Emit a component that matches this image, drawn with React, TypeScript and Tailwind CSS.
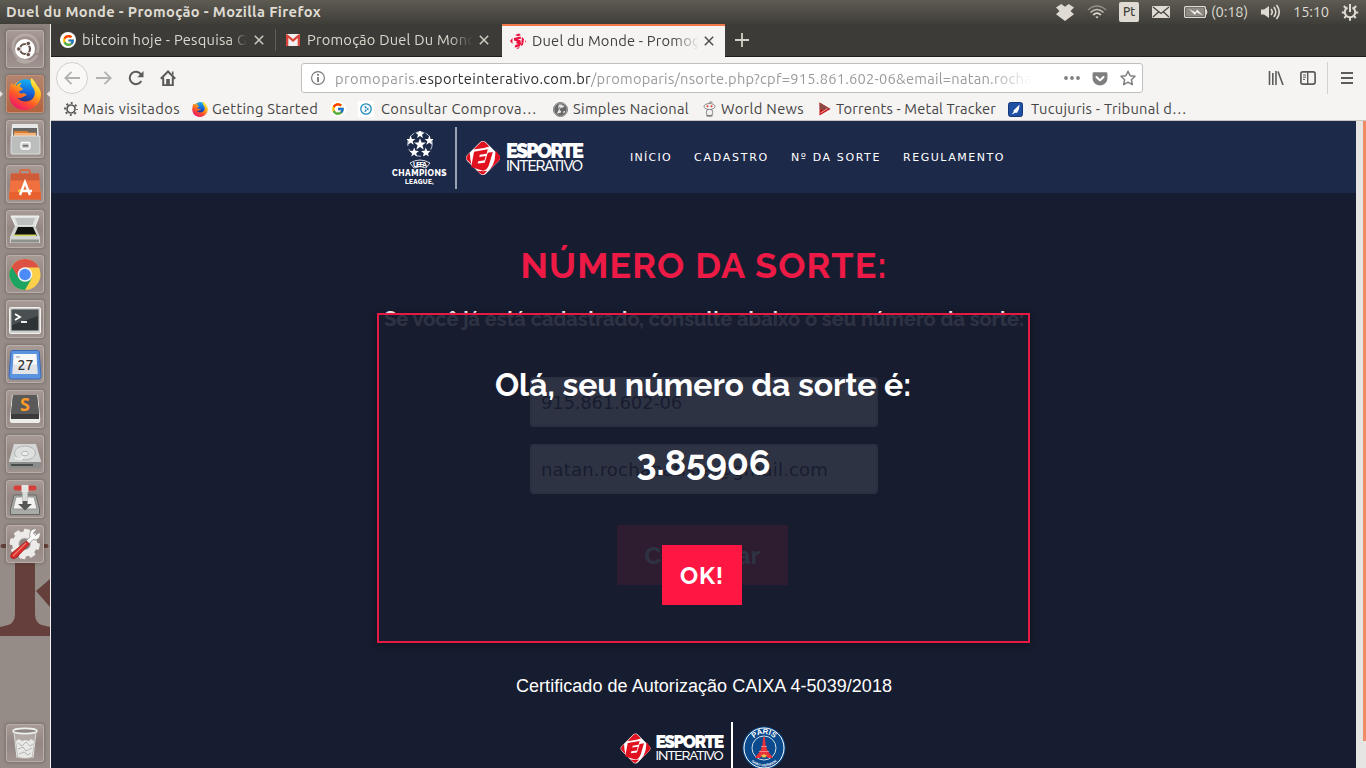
import { useLayoutEffect, useRef, useState, type ReactNode } from "react";
import { FcGoogle } from "react-icons/fc";
import { FaGetPocket, FaGlobeAmericas } from "react-icons/fa";

/* Single line label whose tracking is adjusted to fill a given width. */
function Fit({ w, className = "", children }: { w: number; className?: string; children: string }) {
  const ref = useRef<HTMLSpanElement>(null);
  const [ls, setLs] = useState(0);
  useLayoutEffect(() => {
    const el = ref.current;
    if (el) setLs((w - el.getBoundingClientRect().width) / children.length);
  }, [w, children]);
  return (
    <span className={`block shrink-0 whitespace-nowrap ${className}`} style={{ width: w }}>
      <span ref={ref} className="inline-block whitespace-pre" style={{ letterSpacing: ls }}>
        {children}
      </span>
    </span>
  );
}

function FirefoxIcon({ className }: { className: string }) {
  return (
    <svg viewBox="0 0 32 32" className={className}>
      <defs>
        <linearGradient id="fxBody" x1="0.8" y1="0.05" x2="0.25" y2="0.95">
          <stop offset="0" stopColor="#fff14a" />
          <stop offset="0.35" stopColor="#ffb01c" />
          <stop offset="0.65" stopColor="#ff5a28" />
          <stop offset="1" stopColor="#f01866" />
        </linearGradient>
        <linearGradient id="fxGlobe" x1="0.6" y1="0" x2="0.4" y2="1">
          <stop offset="0" stopColor="#14b4f4" />
          <stop offset="0.6" stopColor="#1560d8" />
          <stop offset="1" stopColor="#2a2f80" />
        </linearGradient>
      </defs>
      <circle cx="16" cy="17" r="14.5" fill="url(#fxBody)" />
      <circle cx="16.5" cy="12.5" r="10.7" fill="url(#fxGlobe)" />
      <path d="M2.500 5C2 9 .4 13 .6 18c.6 8 7 13.600 15 13.600S31 25.500 31.500 17c.3-6-3.500-8-4.500-10.500C25.500 4 24 2 22.200.4 20.500 4 22 7 24.500 11c3 6-1 13-8.500 13-4 0-6.500-1.500-7.500-4.500 2 .8 4 .8 6-.8 1.500-1 2.500-1 3-1.400-.5-1.600-2-2.300-4.500-1.800-1.500.3-2.500-.5-2.800-1.600.5-1.400 3.300-1.600 3.600-2.300.2-1.400-.8-1.700-2.700-2.500C11 7.800 11.500 6.500 13 5.200c-2.500.2-4 1-5 2.600C5.500 7.500 3.500 7 2.500 5z" fill="url(#fxBody)" />
    </svg>
  );
}

function Tile({ firefox = false, children }: { firefox?: boolean; children: ReactNode }) {
  return (
    <div
      className={`relative h-[38px] w-[38px] shrink-0 rounded-[3px] border shadow-[0_0_3px_1px_rgba(60,50,45,0.3)] ${
        firefox
          ? "border-[#c98f72] bg-linear-to-b from-[#b18470] to-[#b3633d]"
          : "border-[#b9aeaa] bg-linear-to-b from-[#a89b96] via-[#948783] to-[#9f938f]"
      }`}
    >
      <svg viewBox="0 0 38 38" className="-m-px block h-[38px] w-[38px]">
        {children}
      </svg>
    </div>
  );
}

const gearTeeth = [0, 45, 90, 135, 180, 225, 270, 315];

function Launcher() {
  return (
    <aside className="relative flex w-[51px] shrink-0 flex-col items-center gap-[7px] border-r border-[#f3efec] bg-linear-to-b from-[#8a817c] via-[#978d88] via-10% to-[#968c87] pt-[6px]">
      <svg viewBox="0 0 50 744" className="absolute top-0 left-0 h-[744px] w-[50px]">
        <g fill="#643f3b">
          <path d="M2 520h45q3 2 0 4H35v66q0 9 7 11l8 2v9H0v-9l8-2q7-2 7-11v-66H2q-3-2 0-4z" />
          <path d="M36 567L50 555v28z" />
        </g>
      </svg>
      <svg viewBox="0 0 50 38" className="absolute top-[51px] left-0 h-[38px] w-[50px]">
        <path d="M0 16l3 3-3 3zM50 16l-3.500 3 3.500 3z" fill="#e8e4e2" />
      </svg>
      <Tile>
        <g fill="none" stroke="#d8d0cd" strokeWidth="2.500" opacity="0.4">
          <path d="M18 5c10-1 17 8 13 18M7 20C5 11 12 5 19 5M31 25c-5 9-15 9-20 4M8 12c-3 12 5 20 15 19" />
        </g>
        <circle cx="19" cy="19" r="10" fill="#fff" />
        <circle cx="19" cy="19" r="5" fill="none" stroke="#66534d" strokeWidth="2.200" />
        <g fill="#66534d" stroke="#fff" strokeWidth="0.900">
          <circle cx="12.700" cy="19" r="2.200" />
          <circle cx="22.300" cy="13.400" r="2.200" />
          <circle cx="22.300" cy="24.600" r="2.200" />
        </g>
      </Tile>
      <Tile firefox>
        <svg x="2.500" y="2.500" width="33" height="33" viewBox="0 0 33 33">
          <FirefoxIcon className="h-[33px] w-[33px]" />
        </svg>
      </Tile>
      <Tile>
        <path d="M6 5q0-1 1-1h24q1 0 1 1l1 13H5z" fill="#e6e7e7" />
        <path d="M7 8h24v9H7z" fill="#686765" />
        <path d="M8 11h13l2 1.500h7V18H8z" fill="#d97b30" />
        <path d="M8 13h22v5H8z" fill="#f1b47c" />
        <rect x="5" y="16" width="29" height="18" rx="1" fill="#bcbdbd" stroke="#e8e8e8" strokeWidth="0.800" />
        <rect x="15" y="22.500" width="9" height="6.500" rx="1.500" fill="#c9c9c9" stroke="#fff" strokeWidth="1.300" />
        <path d="M17 25.700h5" stroke="#666" strokeWidth="1.600" />
      </Tile>
      <Tile>
        <path d="M14 12V7q0-2 2-2h6q2 0 2 2v5" fill="none" stroke="#d56a43" strokeWidth="2" />
        <path d="M5 8.500h28l2 26H3z" fill="#f0713f" />
        <path d="M5 8.500h28l.5 7H4.500z" fill="#cf5c38" />
        <path d="M3.500 27h31l.6 7.500H3z" fill="#e7602e" />
        <path d="M14 30l5-13 5 13M12.500 26h13.500" fill="none" stroke="#fff" strokeWidth="2.400" />
        <circle cx="13.300" cy="26" r="1.200" fill="#f5c518" />
      </Tile>
      <Tile>
        <path d="M5 6h28l-4 11H10z" fill="#e0e2e0" stroke="#f5f5f5" />
        <path d="M9 8h20l-2.500 7H12z" fill="#bdc0be" />
        <path d="M9 16h20l5 11v6H4v-6z" fill="#d3d5d3" />
        <path d="M12 17h15l4 9H8z" fill="#10120f" />
        <path d="M8 24.500h22l.6 1.500H7.500z" fill="#cfd45c" />
        <path d="M5 29.500h28v3H5z" fill="#8f918f" />
      </Tile>
      <Tile>
        <circle cx="19" cy="19.500" r="15.500" fill="#fcd04b" />
        <path d="M5.600 11.700A15.500 15.500 0 0 0 19 35l6.500-11.500L19 19.500z" fill="#1da462" />
        <path d="M5.600 11.700A15.500 15.500 0 0 1 32.900 12.500H19v7L12 22z" fill="#dd5144" />
        <circle cx="19" cy="19.500" r="7.300" fill="#f4f4f4" />
        <circle cx="19" cy="19.500" r="5.800" fill="#4c8bf5" />
      </Tile>
      <Tile>
        <rect x="3.500" y="7.500" width="31" height="26" rx="1.500" fill="#cfd0ce" stroke="#efefee" />
        <rect x="5.500" y="9.500" width="27" height="21" fill="#2e3436" />
        <path d="M6 10h26v6L6 25z" fill="#4a5052" />
        <path d="M9 14l5 3-5 3" fill="none" stroke="#fff" strokeWidth="1.800" />
        <path d="M15 22h6" stroke="#fff" strokeWidth="1.800" />
      </Tile>
      <Tile>
        <path d="M6.500 5.500h25q1.500 0 1.700 1.500l1.800 24q.2 3-2.500 3h-27Q2.800 34 3 31l1.800-24q.2-1.500 1.700-1.500z" fill="#5c93df" stroke="#3b6bb6" />
        <path d="M7.500 9h23l1 20h-25z" fill="#f8f8f8" />
        <path d="M7 19.500h24l.5 9.500h-25z" fill="#e2e3e6" />
        <path d="M10 12h4" stroke="#999" />
        <text x="19.500" y="25" textAnchor="middle" className="fill-[#333] font-['Ubuntu','Open_Sans',sans-serif] text-[14px] font-medium">27</text>
      </Tile>
      <Tile>
        <path d="M6 5h26l2 22q1 6-2 6H6q-3 0-2-6z" fill="#ececea" />
        <path d="M7 5h24l2 19v5H5v-5z" fill="#3b3b3b" />
        <path d="M7 5h24l2 19H5z" fill="#5a5a5a" />
        <text x="19" y="21" textAnchor="middle" className="fill-[#ff9a2b] font-['Open_Sans',sans-serif] text-[18px] font-bold">S</text>
      </Tile>
      <Tile>
        <path d="M8 9h22l5 17v6q0 1-1 1H4q-1 0-1-1v-6z" fill="#d4d5d5" />
        <path d="M3 27h32v5q0 1.500-1 1.500H4q-1 0-1-1.500z" fill="#8b8c8c" />
        <path d="M5 29h22v2H5z" fill="#4a4b4b" />
        <ellipse cx="19" cy="18" rx="10.500" ry="7" fill="#dedfdf" stroke="#aaa" strokeWidth="0.800" />
        <ellipse cx="19" cy="18.500" rx="3.500" ry="2.200" fill="#eee" stroke="#aaa" strokeWidth="0.800" />
        <path d="M9 23l6 1.500 2-3" stroke="#f2f2f2" strokeWidth="1.500" fill="none" />
      </Tile>
      <Tile>
        <path d="M8 15h22l3.500 14v5.500h-29V29z" fill="#a9aba8" stroke="#646663" />
        <path d="M10 17h18l3 12H7z" fill="#f2f2f0" stroke="#888" strokeWidth="0.800" />
        <path d="M16.500 9h5v15h4.500L19 30.500 12 24h4.500z" fill="#555755" />
        <path d="M16.300 8h5.400v13h-5.400z" fill="#d9dbd8" />
        <rect x="7.500" y="5.500" width="23" height="5" rx="2.500" fill="#d6403c" />
        <rect x="15.500" y="5" width="7" height="7" fill="#e4e5e3" />
      </Tile>
      <Tile>
        <g fill="#ecebe9">
          {gearTeeth.map((a) => (
            <rect key={a} x="15.500" y="4" width="6.500" height="7" rx="1" transform={`rotate(${a + 10} 18.700 19)`} />
          ))}
        </g>
        <circle cx="18.700" cy="19" r="9" fill="none" stroke="#ecebe9" strokeWidth="7" />
        <circle cx="18.700" cy="19" r="6" fill="#8d8280" stroke="#cfcdcb" />
        <path d="M24.500 6.500q2-3.500 6.500-2.500l-3.500 4 2 2.500 4.500-3.500q1 5.500-3 7.500-2 1-4 0l-6 6.500-3-3 6-6q-1-3 .5-5.500z" fill="#fafaf9" stroke="#8e8e8c" strokeWidth="0.800" />
        <path d="M20.500 16l3 3L11 32q-3 3-5.500 1-2-2 .5-5z" fill="#db2c2c" stroke="#9b1e1e" strokeWidth="0.800" />
        <path d="M20 18L7 31" stroke="#f07a6c" strokeWidth="1.200" />
      </Tile>
      <div className="mt-auto pb-[6px]">
        <Tile>
          <path d="M8 6l3 28q8 2 16 0l3-28z" fill="#b5aca8" opacity="0.9" />
          <path d="M10 17l3-2 3 2 3-1 4 1 2-2 3 2-2 16q-7 2-14 0z" fill="#e8e9e6" />
          <g fill="none" stroke="#b4b6b2" strokeWidth="1">
            <path d="M12 19l4 3 4-4 4 4 3-2M12 25l5-2 3 4 6-3M13 30l5-2 4 3 3-2" />
          </g>
          <ellipse cx="19" cy="7" rx="12" ry="2.600" fill="#8f8581" stroke="#eef0ed" strokeWidth="1.600" />
          <path d="M8 8l3 26M30 8l-3 26" stroke="#dcdedb" strokeWidth="1" />
        </Tile>
      </div>
    </aside>
  );
}

function EiMark({ className }: { className: string }) {
  return (
    <svg viewBox="0 0 36 36" className={className}>
      <rect x="5.400" y="5.400" width="25.200" height="25.200" rx="4" transform="rotate(45 18 18)" fill="#fff" />
      <g fill="#e0121f">
        <path d="M15.500 3.500Q18 1 20.500 3.500L24 7 19 8.500 9 10z" />
        <path d="M5.500 13Q1 17 2.500 19.500L7 24 6 19z" />
        <path d="M9.500 12L22.500 9.800 21.400 14 15 15 14.500 17 20.500 16.200 19.500 20.200 13.500 21 13 23.200 19.600 22.400 22.500 13 27.300 12.200 23.500 25Q21.500 29.500 18 30L11 28 6.800 26.500Z" />
        <path d="M30 11L33.500 15.500Q35.200 18 33 20.500L24 29.500Q28 25 29 20z" />
        <path d="M12 30L18 30.500 22 30 19.500 32.800Q18 34.500 16 33z" />
      </g>
    </svg>
  );
}

function ChampionsLogo() {
  return (
    <div className="flex w-[55px] flex-col items-center text-white">
      <svg viewBox="0 0 26 26" className="h-[26px] w-[26px]">
        <g fill="#fff">
          {[
            [13, 13.5, 6.2],
            [13, 3, 5],
            [22.3, 9.6, 5],
            [18.8, 21.5, 5],
            [7.2, 21.5, 5],
            [3.7, 9.6, 5],
          ].map(([x, y, r]) => (
            <path
              key={`${x}-${y}`}
              d="M0-10L2.500-3.400 9.500-3.100 4 1.300 5.900 8.100 0 4.200-5.900 8.100-4 1.300-9.500-3.100-2.500-3.400Z"
              transform={`translate(${x} ${y}) scale(${r / 10})`}
            />
          ))}
        </g>
        <circle cx="13" cy="13" r="12.200" fill="none" stroke="#fff" strokeWidth="0.700" strokeDasharray="6 3" />
      </svg>
      <svg viewBox="0 0 22 10" className="mt-[2px] h-[10px] w-[22px]">
        <path d="M1 4Q11-2 21 4L17 9Q11 6 5 9Z" fill="none" stroke="#fff" strokeWidth="0.800" />
        <text x="11" y="7.500" textAnchor="middle" textLength="14" className="fill-white font-['Liberation_Sans',sans-serif] text-[7px] font-bold">UEFA</text>
      </svg>
      <Fit w={55} className="h-[8px] font-['Raleway','Open_Sans',sans-serif] text-[8.5px] leading-[8px] font-extrabold">CHAMPIONS</Fit>
      <Fit w={29} className="mt-[2px] h-[6px] font-['Raleway','Open_Sans',sans-serif] text-[6.5px] leading-[6px] font-extrabold">LEAGUE,</Fit>
    </div>
  );
}

function PsgCrest() {
  return (
    <svg viewBox="0 0 44 44" className="h-[44px] w-[44px] shrink-0">
      <defs>
        <path id="crestTop" d="M8 22a14 14 0 0 1 28 0" />
        <path id="crestBottom" d="M3.500 22a18.500 18.500 0 0 0 37 0" />
      </defs>
      <circle cx="22" cy="22" r="21.500" fill="#0b4a8c" />
      <circle cx="22" cy="22" r="20" fill="none" stroke="#fff" strokeWidth="1" />
      <circle cx="22" cy="22" r="12" fill="#0b4a8c" stroke="#e8eef5" strokeWidth="0.900" />
      <text className="fill-white font-['Liberation_Sans',sans-serif] text-[7.500px] font-bold">
        <textPath href="#crestTop" startOffset="50%" textAnchor="middle">PARIS</textPath>
      </text>
      <text className="fill-white font-['Liberation_Sans',sans-serif] text-[3.500px] font-bold">
        <textPath href="#crestBottom" startOffset="50%" textAnchor="middle">SAINT-GERMAIN</textPath>
      </text>
      <path d="M21.200 11h1.600l.9 8.500 2 5.500 5.500 7h-5q-4-5-8.400 0h-5l5.500-7 2-5.500z" fill="#e8303a" />
      <path d="M19 20.500h6M17 25.500h10" stroke="#f3a9ab" strokeWidth="0.700" />
      <path d="M22 27.500l1 1.500 2-.2-1.500 2.700h-3L19 28.800l2 .2z" fill="#e8c34b" />
    </svg>
  );
}

function TabClose({ dark = false }: { dark?: boolean }) {
  return (
    <svg viewBox="0 0 10 10" className="h-[10px] w-[10px] shrink-0">
      <path d="M.8.8l8.400 8.400M9.200.8L.8 9.200" stroke={dark ? "#4d4d4d" : "#d0ccc4"} strokeWidth="1.500" />
    </svg>
  );
}

const ui = "font-['Ubuntu','Noto_Sans','Open_Sans',sans-serif]";

function TopPanel() {
  return (
    <header className={`flex h-[24px] shrink-0 items-center bg-linear-to-b from-[#5d5b52] to-[#403e39] pl-[6px] text-[#dfdbd2] ${ui}`}>
      <Fit w={315} className="text-[14.67px] leading-[24px] font-bold">Duel du Monde - Promoção - Mozilla Firefox</Fit>
      <svg viewBox="0 0 18 17" className="ml-[735px] h-[17px] w-[18px] shrink-0" fill="#dfdbd2">
        <path d="M5.300 0L9 2.800 12.700 0 18 3.500 14.500 7 18 10.300 15 12.500 9 17 3 12.500 0 10.300 3.500 7 0 3.500z" />
      </svg>
      <svg viewBox="0 0 20 14" className="ml-[13px] h-[14px] w-[20px] shrink-0" fill="none" stroke="#dfdbd2" strokeWidth="1.600">
        <path d="M1 5Q10-3 19 5" opacity="0.45" />
        <path d="M3.500 7.500Q10 1.500 16.500 7.500" opacity="0.8" />
        <path d="M6 10Q10 6.300 14 10" />
        <path d="M8.300 11.500L10 13.500l1.700-2z" fill="#dfdbd2" stroke="none" />
      </svg>
      <span className="ml-[12px] flex h-[20px] w-[20px] shrink-0 items-center justify-center rounded-[2px] bg-[#dfdbd2]">
        <Fit w={12} className="text-[12px] leading-[20px] font-medium text-[#403e39]">Pt</Fit>
      </span>
      <svg viewBox="0 0 18 12" className="ml-[13px] h-[12px] w-[18px] shrink-0">
        <rect width="18" height="12" rx="1" fill="#dfdbd2" />
        <path d="M1 1l8 6.500L17 1M1 11l5.500-5M17 11l-5.500-5" fill="none" stroke="#45433e" strokeWidth="1.200" />
      </svg>
      <svg viewBox="0 0 24 12" className="ml-[14px] h-[12px] w-[24px] shrink-0">
        <rect x="0.600" y="0.600" width="20.800" height="10.800" rx="1" fill="none" stroke="#dfdbd2" strokeWidth="1.200" />
        <rect x="2" y="2" width="18" height="8" fill="#8b8982" />
        <path d="M22 3.500q2 2.500 0 5z" fill="#dfdbd2" stroke="#dfdbd2" />
        <path d="M5 3l6.500 3.300L13 3.500l6 6-6.500-3.300L11 9z" fill="#f3f1ec" />
      </svg>
      <Fit w={37} className="ml-[3px] text-[14.67px] leading-[24px]">(0:18)</Fit>
      <svg viewBox="0 0 21 18" className="ml-[12px] h-[18px] w-[21px] shrink-0" fill="none" stroke="#dfdbd2" strokeWidth="1.600">
        <path d="M1 6.500h3L9 3v12l-5-3.500H1z" fill="#dfdbd2" stroke="none" />
        <path d="M11 6q2.500 3 0 6M13.800 4q4 5 0 10M16.500 2q5.500 7 0 14" />
      </svg>
      <Fit w={36} className="ml-[12px] text-[14.67px] leading-[24px]">15:10</Fit>
      <svg viewBox="0 0 18 18" className="ml-[12px] h-[18px] w-[18px] shrink-0" fill="none" stroke="#dfdbd2">
        <path d="M6.500 4.500a5.200 5.200 0 1 0 5 0" strokeWidth="2" />
        <path d="M9 1v8" strokeWidth="2" />
        <path d="M2.800 3l2 2M15.200 3l-2 2M.8 9.500H3.500M14.500 9.500h2.700M3.200 15l2-2M14.800 15l-2-2M9 15v2.700" strokeWidth="2" />
      </svg>
    </header>
  );
}

function TabBar() {
  return (
    <div className={`flex h-[33px] shrink-0 border-b border-[#1f1e1c] bg-[#3c3b37] text-[14.67px] leading-[34px] text-[#dcd8cf] ${ui}`}>
      <div className="flex w-[224px] shrink-0 items-center pl-[9px]">
        <span className="flex h-[16px] w-[16px] shrink-0 items-center justify-center rounded-full bg-white">
          <FcGoogle className="h-[13px] w-[13px]" />
        </span>
        <Fit w={165} className="ml-[6px] mask-r-from-90% mask-r-to-100%">bitcoin hoje - Pesquisa G</Fit>
        <span className="ml-[7px]"><TabClose /></span>
      </div>
      <div className="my-[5px] w-px shrink-0 bg-[#5f5e59]" />
      <div className="flex w-[225px] shrink-0 items-center pl-[10px]">
        <svg viewBox="0 0 14 12" className="h-[12px] w-[14px] shrink-0">
          <rect width="14" height="12" rx="1" fill="#f1efef" />
          <path d="M0 1v11h2.300V4L7 8l4.700-4v8H14V1L13 0 7 5 1 0z" fill="#d9453a" />
        </svg>
        <Fit w={169} className="ml-[7px] mask-r-from-84% mask-r-to-98%">Promoção Duel Du Mond</Fit>
        <span className="ml-[3px]"><TabClose /></span>
      </div>
      <div className="-mb-px ml-px flex w-[223px] shrink-0 items-center border-t-2 border-[#f0794a] bg-[#f5f4f2] pl-[8px] leading-[32px] text-[#404040]">
        <svg viewBox="0 0 16 16" className="-mt-px h-[16px] w-[16px] shrink-0" fill="#ed1140">
          <path d="M5 2l4-1.500 2 1.500-3 1.200zM0 8l2.500-3v6zM4 5l6.500-1.500.8 2-3.800.9 3 .9.500 4-1.500 2.200-5 1 1-2.700 3-.6L6 10l1-1.500-3-.9zM12 4l2 2-1 6-2 1zM15 7l1 1.500-1 1.200zM6 15l4-1-2 2z" />
        </svg>
        <Fit w={167} className="-mt-px ml-[6px] mask-r-from-84% mask-r-to-100%">Duel du Monde - Promoç</Fit>
        <span className="-mt-px ml-[5px]"><TabClose dark /></span>
      </div>
      <svg viewBox="0 0 14 14" className="mt-[9px] ml-[10px] h-[14px] w-[14px]">
        <path d="M7 0v14M0 7h14" stroke="#d5d1c8" strokeWidth="1.800" />
      </svg>
    </div>
  );
}

function ToolBar() {
  return (
    <div className={`flex h-[42px] shrink-0 items-center bg-[#f5f4f2] pl-[5px] ${ui}`}>
      <span className="flex h-[32px] w-[32px] shrink-0 items-center justify-center rounded-full border border-[#d2d0ce] bg-[#f9f8f7]">
        <svg viewBox="0 0 16 14" className="h-[14px] w-[16px]" fill="none" stroke="#b1b1b0" strokeWidth="1.800">
          <path d="M16 7H1.500M7.500.8L1.300 7l6.200 6.200" />
        </svg>
      </span>
      <svg viewBox="0 0 16 14" className="ml-[8px] h-[14px] w-[16px]" fill="none" stroke="#b1b1b0" strokeWidth="1.800">
        <path d="M0 7h14.500M8.500.8L14.700 7l-6.200 6.200" />
      </svg>
      <svg viewBox="0 0 16 16" className="ml-[16px] h-[16px] w-[16px]" fill="none" stroke="#5b5b5a" strokeWidth="2">
        <path d="M13.300 11A6.200 6.200 0 1 1 13 4.400" />
        <path d="M15.500 1v6.200H9.300z" fill="#5b5b5a" stroke="none" />
      </svg>
      <svg viewBox="0 0 16 16" className="ml-[16px] h-[16px] w-[16px]">
        <path d="M.8 8.800L8 1.500l7.200 7.300M3.200 7.500v7.700h9.600V7.500" fill="none" stroke="#5b5b5a" strokeWidth="2" />
        <path d="M6.200 15V9h3.600v6z" fill="#5b5b5a" />
        <path d="M12 1.500h1.500v4L12 4z" fill="#5b5b5a" />
      </svg>
      <div className="ml-[125px] flex h-[30px] w-[842px] shrink-0 items-center rounded-[3px] border border-[#c2c0bd] bg-white pl-[9px] text-[14.67px] leading-[28px] text-[#9a9a9a]">
        <svg viewBox="0 0 14 14" className="h-[14px] w-[14px] shrink-0">
          <circle cx="7" cy="7" r="6.400" fill="none" stroke="#737373" strokeWidth="1.100" />
          <path d="M6.100 6h1.800v5H6.100zM6.100 3h1.800v1.800H6.100z" fill="#737373" />
        </svg>
        <div className="ml-[10px] flex w-[696px] shrink-0 pt-px mask-r-from-94% mask-r-to-100%">
          <Fit w={84}>promoparis.</Fit>
          <Fit w={172} className="text-[#2e2e2e]">esporteinterativo.com.br</Fit>
          <Fit w={441}>/promoparis/nsorte.php?cpf=915.861.602-06&email=natan.rocha</Fit>
        </div>
        <svg viewBox="0 0 16 4" className="ml-[33px] h-[4px] w-[16px] shrink-0" fill="#7f7f7f">
          <circle cx="2" cy="2" r="1.900" /><circle cx="8" cy="2" r="1.900" /><circle cx="14" cy="2" r="1.900" />
        </svg>
        <FaGetPocket className="ml-[12px] h-[17px] w-[16px] shrink-0 text-[#7f7f7f]" />
        <svg viewBox="0 0 16 16" className="ml-[12px] h-[16px] w-[16px] shrink-0">
          <path d="M8 1.200l2.100 4.500 4.900.6-3.600 3.400.9 4.900L8 12.200l-4.300 2.400.9-4.900L1 6.300l4.900-.6z" fill="none" stroke="#7f7f7f" strokeWidth="1.500" strokeLinejoin="round" />
        </svg>
      </div>
      <svg viewBox="0 0 16 14" className="ml-[125px] h-[14px] w-[16px] shrink-0" stroke="#5b5b5a" strokeWidth="1.600">
        <path d="M1.500 0v14M4.800 2v12M8 0v14M10 .5L15 14" />
      </svg>
      <svg viewBox="0 0 16 14" className="ml-[16px] h-[14px] w-[16px] shrink-0" fill="none" stroke="#5b5b5a">
        <rect x="0.900" y="0.900" width="14.200" height="12.200" rx="2" strokeWidth="1.700" />
        <path d="M7.700 1v12" strokeWidth="1.400" />
        <path d="M3 4h3M3 6.200h3M3 8.400h2" strokeWidth="1" />
      </svg>
      <div className="ml-[11px] h-[32px] w-px shrink-0 bg-[#d4d2cf]" />
      <svg viewBox="0 0 12 12" className="ml-[13px] h-[12px] w-[12px] shrink-0" stroke="#5b5b5a" strokeWidth="1.800">
        <path d="M0 1h12M0 6h12M0 11h12" />
      </svg>
    </div>
  );
}

function Bookmarks() {
  return (
    <div className={`flex h-[22px] shrink-0 items-center border-b border-[#c9c6c2] bg-[#f5f4f2] pb-px pl-[13px] text-[14.67px] leading-[20px] text-[#454545] ${ui}`}>
      <svg viewBox="0 0 14 14" className="h-[14px] w-[14px] shrink-0" fill="none" stroke="#5b5b5a">
        <circle cx="7" cy="7" r="4" strokeWidth="1.700" />
        <circle cx="7" cy="7" r="5.900" strokeWidth="2" strokeDasharray="2 2.634" strokeDashoffset="1" />
      </svg>
      <Fit w={97} className="ml-[5px]">Mais visitados</Fit>
      <FirefoxIcon className="ml-[12px] h-[16px] w-[16px] shrink-0" />
      <Fit w={106} className="ml-[4px]">Getting Started</Fit>
      <span className="ml-[12px] flex h-[16px] w-[16px] shrink-0 items-center justify-center rounded-full bg-white">
        <FcGoogle className="h-[14px] w-[14px]" />
      </span>
      <svg viewBox="0 0 16 16" className="ml-[12px] h-[16px] w-[16px] shrink-0">
        <rect width="16" height="16" fill="#fff" />
        <circle cx="8" cy="8" r="5.200" fill="none" stroke="#1d88b8" strokeWidth="1.300" />
        <path d="M6.500 4.500l2.500 1.800-2 1.500zM10.500 6.500v3L8 8zM6.500 11.500l2.500-1.800-2-1.500z" fill="#1d88b8" />
      </svg>
      <Fit w={156} className="ml-[7px]">Consultar Comprova…</Fit>
      <span className="ml-[16px] flex h-[15px] w-[15px] shrink-0 items-center justify-center rounded-full border border-[#777] bg-[#e4e4e4]">
        <FaGlobeAmericas className="h-[13px] w-[13px] rotate-45 text-[#686868]" />
      </span>
      <Fit w={116} className="ml-[5px]">Simples Nacional</Fit>
      <svg viewBox="0 0 13 16" className="ml-[14px] h-[16px] w-[13px] shrink-0" fill="#f2f2f2" stroke="#777" strokeWidth="0.900">
        <path d="M6.500 2.500L7 .8l2.500.5" fill="none" />
        <ellipse cx="6.500" cy="11.500" rx="3.200" ry="3.700" />
        <path d="M3.500 14.800H9.500" strokeWidth="1.400" />
        <ellipse cx="6.500" cy="5.500" rx="5.500" ry="3" />
        <circle cx="4.500" cy="5.300" r="1" fill="#e33a21" stroke="none" />
        <circle cx="8.500" cy="5.300" r="1" fill="#e33a21" stroke="none" />
      </svg>
      <Fit w={83} className="ml-[5px]">World News</Fit>
      <svg viewBox="0 0 12 14" className="ml-[15px] h-[14px] w-[12px] shrink-0">
        <path d="M.5.5L11.500 7 .5 13.500z" fill="#c4161c" />
        <path d="M.5.500L11.500 7 1 8z" fill="#8d4a44" />
        <path d="M1.500 11l7-4.500" stroke="#f2a49f" strokeWidth="1" />
      </svg>
      <Fit w={160} className="ml-[5px]">Torrents - Metal Tracker</Fit>
      <svg viewBox="0 0 15 15" className="ml-[12px] h-[15px] w-[15px] shrink-0">
        <rect x="0.500" y="0.500" width="14" height="14" rx="2" fill="#1e4fa3" stroke="#16397a" />
        <path d="M11.500 2.500L5 9l1 .5-2.500 3L8 10.500 9 11l2-4z" fill="#fff" />
      </svg>
      <Fit w={156} className="ml-[8px]">Tucujuris - Tribunal d…</Fit>
    </div>
  );
}

const raleway = "font-['Raleway','Lato',sans-serif] font-bold";
const wordmark = "font-['Raleway','Lato',sans-serif]";

function Page() {
  return (
    <div className="flex min-h-0 flex-1">
      <div className="relative flex w-[1305px] shrink-0 flex-col items-center overflow-hidden bg-[#171d30]">
        <nav className="flex h-[72px] w-full shrink-0 items-center bg-[#1d2949] pt-[2px] pl-[341px] font-['DejaVu_Sans',sans-serif] text-[11px] text-white">
          <ChampionsLogo />
          <div className="ml-[8px] h-[62px] w-[2px] bg-[#9aa1b3]" />
          <EiMark className="ml-[7px] h-[38px] w-[38px]" />
          <div className={`ml-[4px] ${wordmark}`}>
            <Fit w={76} className="text-[20px] leading-[17px] font-black">ESPORTE</Fit>
            <Fit w={76} className="text-[15px] leading-[13px] font-medium">INTERATIVO</Fit>
          </div>
          <div className="ml-[48px] flex gap-[22px]">
            <Fit w={42}>INÍCIO</Fit>
            <Fit w={75}>CADASTRO</Fit>
            <Fit w={90}>Nº DA SORTE</Fit>
            <Fit w={102}>REGULAMENTO</Fit>
          </div>
        </nav>
        <Fit w={367} className={`mt-[50px] ml-px text-[36px] leading-[45px] text-[#ed1a46] ${raleway}`}>NÚMERO DA SORTE:</Fit>
        <Fit w={640} className={`mt-[19px] ml-px text-[20px] leading-[24px] text-white ${raleway}`}>
          Se você já está cadastrado, consulte abaixo o seu número da sorte:
        </Fit>
        <div className="mt-[46px] ml-px h-[50px] w-[348px] shrink-0 rounded-[4px] border-2 border-[#d4d6da] bg-white pl-[9px] font-['DejaVu_Sans',sans-serif] text-[18px] leading-[48px] text-[#151b2b]">
          <Fit w={141}>915.861.602-06</Fit>
        </div>
        <div className="mt-[17px] ml-px h-[50px] w-[348px] shrink-0 rounded-[4px] border-2 border-[#d4d6da] bg-white pl-[9px] font-['DejaVu_Sans',sans-serif] text-[18px] leading-[48px] text-[#151b2b]">
          <Fit w={287}>natan.rochabatista@gmail.com</Fit>
        </div>
        <div className={`mt-[31px] -ml-[2px] flex h-[60px] w-[171px] shrink-0 justify-center bg-[#ff1744] text-[24px] leading-[62px] text-white ${raleway}`}>
          <Fit w={116}>Consultar</Fit>
        </div>
        <Fit w={376} className="mt-[89px] ml-px font-['Liberation_Sans',sans-serif] text-[18px] leading-[24px] text-white">
          Certificado de Autorização CAIXA 4-5039/2018
        </Fit>
        <div className="mt-[24px] -ml-[3px] flex h-[52px] shrink-0 items-center text-white">
          <EiMark className="h-[33px] w-[33px]" />
          <div className={`ml-[4px] ${wordmark}`}>
            <Fit w={67} className="text-[17.5px] leading-[14px] font-black">ESPORTE</Fit>
            <Fit w={67} className="text-[13.5px] leading-[12px] font-medium">INTERATIVO</Fit>
          </div>
          <div className="ml-[8px] h-[52px] w-[2px] bg-white" />
          <div className="ml-[9px]"><PsgCrest /></div>
        </div>
        <div className="absolute top-[192px] left-[326px] flex h-[330px] w-[653px] flex-col items-center border-2 border-[#e61a45] bg-[#171d30]/90 shadow-[0_2px_8px_rgba(0,0,0,0.45)]">
          <Fit w={416} className={`mt-[50px] -ml-px text-[32px] leading-[40px] text-white ${raleway}`}>Olá, seu número da sorte é:</Fit>
          <Fit w={134} className={`mt-[32px] text-[36px] leading-[50px] text-white oldstyle-nums ${raleway}`}>3.85906</Fit>
          <button className={`mt-[58px] -ml-[3px] flex h-[60px] w-[80px] shrink-0 justify-center bg-[#ff1744] text-[24px] leading-[62px] text-white ${raleway}`}>
            <Fit w={44}>OK!</Fit>
          </button>
        </div>
      </div>
      <div className="flex flex-1 justify-end bg-[#e6e5e4]">
        <div className="h-[620px] w-[3px] bg-[#ee8c66]" />
      </div>
    </div>
  );
}

export default function App() {
  return (
    <div className="flex h-[768px] w-[1366px] flex-col overflow-hidden">
      <TopPanel />
      <div className="flex min-h-0 flex-1">
        <Launcher />
        <div className="flex min-w-0 flex-1 flex-col">
          <TabBar />
          <ToolBar />
          <Bookmarks />
          <Page />
        </div>
      </div>
    </div>
  );
}
